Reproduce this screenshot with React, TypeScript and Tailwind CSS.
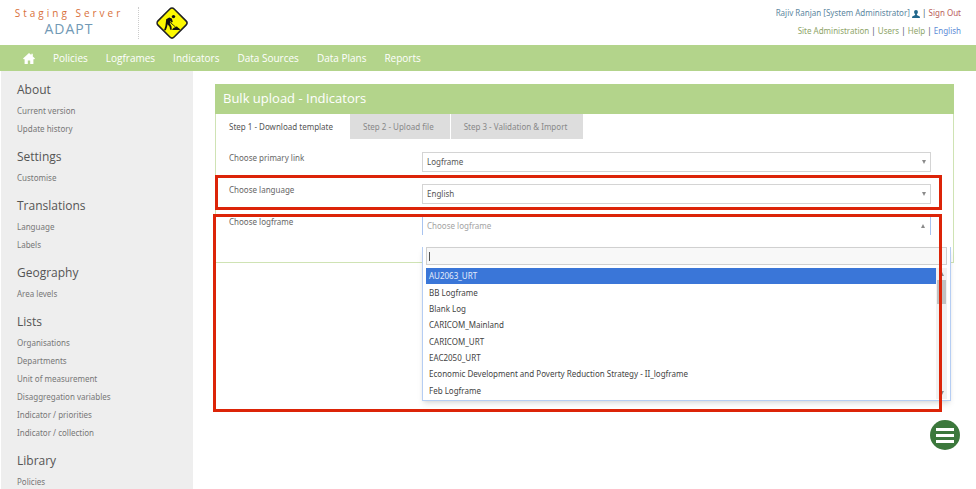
import React from "react";

const navLinks = ["Policies", "Logframes", "Indicators", "Data Sources", "Data Plans", "Reports"];

const sections = [
  { title: "About", items: ["Current version", "Update history"] },
  { title: "Settings", items: ["Customise"] },
  { title: "Translations", items: ["Language", "Labels"] },
  { title: "Geography", items: ["Area levels"] },
  {
    title: "Lists",
    items: [
      "Organisations",
      "Departments",
      "Unit of measurement",
      "Disaggregation variables",
      "Indicator / priorities",
      "Indicator / collection",
    ],
  },
  { title: "Library", items: ["Policies"] },
];

const logframes = [
  "AU2063_URT",
  "BB Logframe",
  "Blank Log",
  "CARICOM_Mainland",
  "CARICOM_URT",
  "EAC2050_URT",
  "Economic Development and Poverty Reduction Strategy - II_logframe",
  "Feb Logframe",
];

function RoadWorksSign() {
  return (
    <svg viewBox="0 0 34 34" className="h-[34px] w-[34px]" role="img" aria-label="Under construction">
      <rect x="5.6" y="5.6" width="22.8" height="22.8" rx="3" transform="rotate(45 17 17)" fill="#fdf900" stroke="#222" strokeWidth="1.6" />
      <circle cx="18.5" cy="10.6" r="1.7" fill="#111" />
      <path d="M11.2 13.2l3-1.8 2.6 1 1 3.4-1.3 1-.8-2-.9 2.4 1.7 3.2.3 3.4h-1.7l-.5-3-2-2.5-.6 2.8-1.2 3.2H9l1.4-4.2z" fill="#111" />
      <path d="M13 14.5l7.5 6.5" stroke="#111" strokeWidth=".8" />
      <path d="M17 23.9c1-2 2-2.4 3-2.4.8-1.2 2.4-1.2 3 .2 1 .3 1.8 1 2.2 2.2z" fill="#111" />
    </svg>
  );
}

function HomeIcon() {
  return (
    <svg viewBox="0 0 12 11" className="h-[11px] w-3" fill="#fff" aria-hidden="true">
      <path d="M6 0L8.3 2.1V.8h1.5v2.7L12 5.6l-.7.7h-.9V11H7.2V7.6H4.8V11H1.6V6.3H.7L0 5.6z" />
    </svg>
  );
}

function UserIcon() {
  return (
    <svg viewBox="0 0 9 9" className="inline h-2 w-2" fill="#22688c" aria-hidden="true">
      <path d="M4.5 0c1.4 0 2.1 1 2.1 2.3 0 1.2-.5 2-1.1 2.5v.8c0 .6 3 .9 3.4 2.1V9H.1V7.7C.5 6.5 3.5 6.2 3.5 5.6v-.8C2.9 4.3 2.4 3.5 2.4 2.3 2.4 1 3.1 0 4.5 0z" />
    </svg>
  );
}

function Arrow({ up = false }: { up?: boolean }) {
  return (
    <svg viewBox="0 0 4 4" className="pointer-events-none h-1 w-1" fill="#8a8a8a" aria-hidden="true">
      {up ? <path d="M2 0l2 4H0z" /> : <path d="M0 0h4L2 4z" />}
    </svg>
  );
}

function SelectRow({ id, label, value }: { id: string; label: string; value: string }) {
  return (
    <div className="flex h-8">
      <label htmlFor={id} className="w-[193px] shrink-0 leading-3">
        {label}
      </label>
      <div className="grid h-5 flex-1 items-center">
        <select
          id={id}
          defaultValue={value}
          className="col-start-1 row-start-1 h-5 w-full appearance-none border border-[#d4d4d4] bg-white pl-1 text-[#555]"
        >
          <option>{value}</option>
        </select>
        <span className="pointer-events-none col-start-1 row-start-1 mr-[5px] justify-self-end">
          <Arrow />
        </span>
      </div>
    </div>
  );
}

function Header() {
  return (
    <header className="flex h-[45px] justify-between bg-white">
      <div className="flex items-center">
        <div className="flex w-[138px] flex-col items-center font-['Open_Sans',sans-serif]">
          <span className="text-[10px] leading-3 tracking-[3px] text-[#d9703a]">Staging Server</span>
          <span className="text-[14px] leading-5 font-medium tracking-[1px] text-[#7199b5]">ADAPT</span>
        </div>
        <div className="h-8 border-l border-dotted border-[#ccc]" />
        <div className="pl-4">
          <RoadWorksSign />
        </div>
      </div>
      <div className="flex flex-col gap-[6px] pt-[7px] pr-[15px] text-right leading-3 text-[#456]">
        <div>
          <a href="#profile" className="text-[#5c87a0]">
            Rajiv Ranjan [System Administrator] <UserIcon />
          </a>{" "}
          | <a href="#signout" className="text-[#b9605a]">Sign Out</a>
        </div>
        <div>
          <a href="#admin" className="text-[#8ea468]">Site Administration</a> |{" "}
          <a href="#users" className="text-[#8ea468]">Users</a> |{" "}
          <a href="#help" className="text-[#8ea468]">Help</a> |{" "}
          <a href="#lang" className="text-[#5d8bd6]">English</a>
        </div>
      </div>
    </header>
  );
}

function LogframePicker() {
  return (
    <div className="flex">
      <label htmlFor="logframe" className="w-[193px] shrink-0 leading-3">
        Choose logframe
      </label>
      <div className="relative flex-1">
        <button
          id="logframe"
          type="button"
          aria-expanded="true"
          className="flex h-[19px] w-full items-center justify-between border-x border-[#a9c4f0] pr-[5px] pl-1 text-[#a3a3a3]"
        >
          Choose logframe
          <Arrow up />
        </button>
        <div className="absolute top-[31px] -right-5 left-0 border border-t-0 border-[#b5cdf3] bg-white px-[3px] pb-px text-[#444] shadow-md">
          <div className="grid items-center">
            <input
              aria-label="Search logframes"
              className="col-start-1 row-start-1 h-[18px] w-full border border-[#d0d0d0] bg-[#f8f8f8] px-1 outline-none"
            />
            <span className="col-start-1 row-start-1 ml-[3px] h-[9px] w-px bg-[#555]" />
          </div>
          <div className="mt-[3px] flex h-[131px]">
            <ul role="listbox" aria-label="Logframes" className="flex flex-1 flex-col">
              {logframes.map((name, i) => (
                <li
                  key={name}
                  role="option"
                  aria-selected={i === 0}
                  className={
                    i === 0
                      ? "flex flex-1 items-center bg-[#3a76d8] pl-[3px] text-[#e4edfb]"
                      : "flex flex-1 items-center pl-[3px]"
                  }
                >
                  {name}
                </li>
              ))}
            </ul>
            <div className="flex w-[11px] flex-col items-center justify-between bg-[#f1f1f1] pt-1 pb-1">
              <div className="flex w-full flex-col items-center gap-1">
                <Arrow up />
                <div className="h-6 w-[9px] bg-[#c1c1c1]" />
              </div>
              <Arrow />
            </div>
          </div>
        </div>
      </div>
    </div>
  );
}

export default function App() {
  return (
    <div className="h-screen overflow-hidden bg-white font-['Noto_Sans','Open_Sans',sans-serif] text-[8px] text-[#666]">
      <Header />
      <nav className="flex h-[26px] items-center gap-[18px] bg-[#b3d48b] pl-[23px] font-['Open_Sans',sans-serif] text-[10px] text-white">
        <a href="#home" aria-label="Home">
          <HomeIcon />
        </a>
        {navLinks.map((l) => (
          <a key={l} href="#nav">
            {l}
          </a>
        ))}
      </nav>
      <div className="flex">
        <aside className="ml-px h-[calc(100vh-71px)] w-48 shrink-0 overflow-hidden bg-[#eee] pt-[10px] pl-4">
          {sections.map((s) => (
            <section key={s.title} className="mb-[10px]">
              <h2 className="mb-[3px] font-['Open_Sans',sans-serif] text-[12px] leading-[18px] text-[#555]">{s.title}</h2>
              <ul>
                {s.items.map((item) => (
                  <li key={item} className="leading-[18px] text-[#777]">
                    <a href="#item">{item}</a>
                  </li>
                ))}
              </ul>
            </section>
          ))}
        </aside>
        <main className="min-w-0 flex-1 pt-[13px] pr-[22px] pl-[22px]">
          <div className="relative border border-[#cfe3b4]">
            <h1 className="-mx-px -mt-px flex h-[30px] items-center bg-[#b3d48b] pl-2 font-['Open_Sans',sans-serif] text-[13px] text-white">
              Bulk upload - Indicators
            </h1>
            <div role="tablist" className="flex h-[25px] gap-px">
              <button role="tab" aria-selected="true" type="button" className="pr-4 pl-[13px] text-[#555]">
                Step 1 - Download template
              </button>
              <button role="tab" aria-selected="false" type="button" className="bg-[#ddd] pr-4 pl-[13px] text-[#888]">
                Step 2 - Upload file
              </button>
              <button role="tab" aria-selected="false" type="button" className="bg-[#ddd] pr-4 pl-[13px] text-[#888]">
                Step 3 - Validation &amp; Import
              </button>
            </div>
            <div className="h-[123px] pt-[13px] pr-[22px] pl-[13px]">
              <SelectRow id="primary" label="Choose primary link" value="Logframe" />
              <SelectRow id="language" label="Choose language" value="English" />
              <LogframePicker />
            </div>
            <div className="pointer-events-none absolute top-[90px] right-[11px] -left-px h-[35px] border-[3px] border-[#dc2408]" />
            <div className="pointer-events-none absolute top-[129px] right-[11px] -left-[3px] h-[198px] border-[3px] border-[#dc2408]" />
          </div>
        </main>
      </div>
      <button
        type="button"
        aria-label="Menu"
        className="fixed right-4 bottom-[39px] flex h-[30px] w-[30px] flex-col items-center justify-center gap-[3px] rounded-full bg-[#3c783c]"
      >
        <span className="h-[3px] w-[18px] bg-white" />
        <span className="h-[3px] w-[18px] bg-white" />
        <span className="h-[3px] w-[18px] bg-white" />
      </button>
    </div>
  );
}
